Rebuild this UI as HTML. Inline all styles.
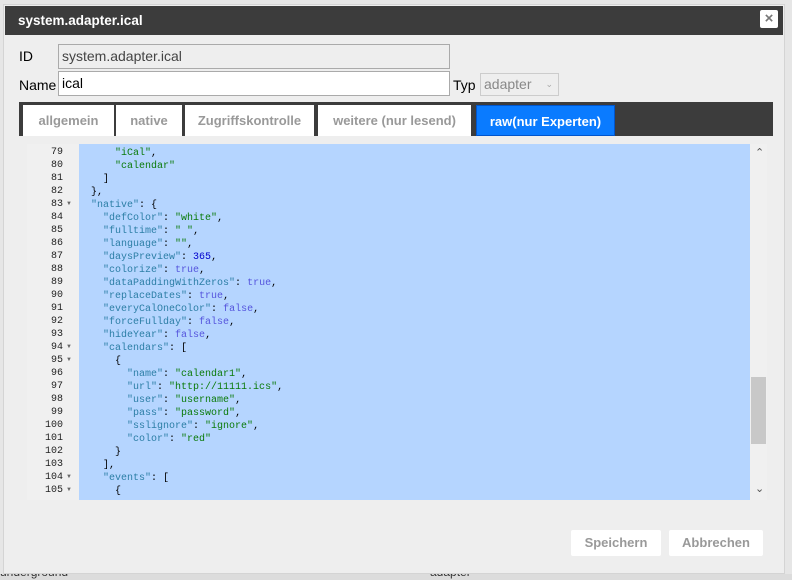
<!DOCTYPE html>
<html><head><style>
body{margin:0;width:792px;height:580px;background:#e6e6e6;position:relative;overflow:hidden;font-family:"Liberation Sans",sans-serif;}
.dlg{position:absolute;left:3px;top:4px;width:782px;height:570px;background:#eeeeee;border:1px solid #d4d4d4;box-sizing:border-box}
.title{position:absolute;left:1px;top:1px;right:1px;height:29px;background:#3c3c3c;color:#fff;font-weight:bold;font-size:13.5px;line-height:29px;padding-left:13px}
.x{position:absolute;left:756px;top:5px;width:18px;height:18px;background:#fff;border-radius:2px;color:#777;font-size:15px;line-height:18px;text-align:center;font-weight:bold}
.lbl{position:absolute;font-size:14px;color:#000}
.inp{position:absolute;border:1px solid #aaa;font-size:14px;line-height:22px;padding-left:3px;box-sizing:border-box;color:#000}
.tabs{position:absolute;left:19px;top:102px;width:754px;height:34px;background:#3c3c3c}
.tab{position:absolute;top:3px;height:31px;background:#fff;color:#999;font-weight:bold;font-size:13px;line-height:31px;text-align:center}
.ed{position:absolute;left:27px;top:144px;width:740px;height:356px;background:#f0f0f0;overflow:hidden}
.gut{position:absolute;left:0;top:0;width:50px;height:356px;background:#f0f0f0}
.code{position:absolute;left:52px;top:0;width:671px;height:356px;background:#b5d5ff}
.ln{position:absolute;left:0;width:36px;text-align:right;font-family:"Liberation Mono",monospace;font-size:10px;color:#222}
.ar{position:absolute;left:39px;font-size:6px;color:#666}
pre{margin:0;position:absolute;left:0;top:3px;font-family:"Liberation Mono",monospace;font-size:10px;line-height:13px;color:#000}
.k{color:#2c7ea6}.s{color:#0a7a0a}.n{color:#0000cd}.b{color:#5555dd}
.sb{position:absolute;left:724px;top:0;width:16px;height:356px;background:#f0f0f0}
.btn{position:absolute;top:526px;height:26px;background:#fff;border-radius:2px;color:#999;font-weight:bold;font-size:13px;line-height:26px;text-align:center}
</style></head><body>
<div class="dlg">
<div class="title">system.adapter.ical</div>
<div class="x">×</div>
<div class="lbl" style="left:15px;top:43px">ID</div>
<div class="inp" style="left:54px;top:39px;width:392px;height:25px;background:#eee;color:#444">system.adapter.ical</div>
<div class="lbl" style="left:15px;top:72px">Name</div>
<div class="inp" style="left:54px;top:66px;width:392px;height:25px;background:#fff">ical</div>
<div class="lbl" style="left:449px;top:72px">Typ</div>
<div class="inp" style="left:476px;top:68px;width:79px;height:23px;background:#eee;color:#888;border-color:#ccc;line-height:21px">adapter <span style="position:absolute;right:5px;font-size:9px;color:#aaa">&#8964;</span></div>
</div>
<div class="tabs">
<div class="tab" style="left:4px;width:91px">allgemein</div>
<div class="tab" style="left:97px;width:66px">native</div>
<div class="tab" style="left:166px;width:129px">Zugriffskontrolle</div>
<div class="tab" style="left:299px;width:153px">weitere (nur lesend)</div>
<div class="tab" style="left:457px;width:139px;background:#0a7bff;color:#fff;border:1px solid #0055cc;box-sizing:border-box;top:3px">raw(nur Experten)</div>
</div>
<div class="ed">
<div class="gut">
<div style="position:absolute;top:3px;left:0">
<div class="ln" style="top:0">79</div><div class="ln" style="top:13px">80</div><div class="ln" style="top:26px">81</div><div class="ln" style="top:39px">82</div><div class="ln" style="top:52px">83</div><div class="ar" style="top:54px">▼</div><div class="ln" style="top:65px">84</div><div class="ln" style="top:78px">85</div><div class="ln" style="top:91px">86</div><div class="ln" style="top:104px">87</div><div class="ln" style="top:117px">88</div><div class="ln" style="top:130px">89</div><div class="ln" style="top:143px">90</div><div class="ln" style="top:156px">91</div><div class="ln" style="top:169px">92</div><div class="ln" style="top:182px">93</div><div class="ln" style="top:195px">94</div><div class="ar" style="top:197px">▼</div><div class="ln" style="top:208px">95</div><div class="ar" style="top:210px">▼</div><div class="ln" style="top:221px">96</div><div class="ln" style="top:234px">97</div><div class="ln" style="top:247px">98</div><div class="ln" style="top:260px">99</div><div class="ln" style="top:273px">100</div><div class="ln" style="top:286px">101</div><div class="ln" style="top:299px">102</div><div class="ln" style="top:312px">103</div><div class="ln" style="top:325px">104</div><div class="ar" style="top:327px">▼</div><div class="ln" style="top:338px">105</div><div class="ar" style="top:340px">▼</div>
</div></div>
<div class="code"><pre>      <span class="s">"iCal"</span>,
      <span class="s">"calendar"</span>
    ]
  },
  <span class="k">"native"</span>: {
    <span class="k">"defColor"</span>: <span class="s">"white"</span>,
    <span class="k">"fulltime"</span>: <span class="s">" "</span>,
    <span class="k">"language"</span>: <span class="s">""</span>,
    <span class="k">"daysPreview"</span>: <span class="n">365</span>,
    <span class="k">"colorize"</span>: <span class="b">true</span>,
    <span class="k">"dataPaddingWithZeros"</span>: <span class="b">true</span>,
    <span class="k">"replaceDates"</span>: <span class="b">true</span>,
    <span class="k">"everyCalOneColor"</span>: <span class="b">false</span>,
    <span class="k">"forceFullday"</span>: <span class="b">false</span>,
    <span class="k">"hideYear"</span>: <span class="b">false</span>,
    <span class="k">"calendars"</span>: [
      {
        <span class="k">"name"</span>: <span class="s">"calendar1"</span>,
        <span class="k">"url"</span>: <span class="s">"http://11111.ics"</span>,
        <span class="k">"user"</span>: <span class="s">"username"</span>,
        <span class="k">"pass"</span>: <span class="s">"password"</span>,
        <span class="k">"sslignore"</span>: <span class="s">"ignore"</span>,
        <span class="k">"color"</span>: <span class="s">"red"</span>
      }
    ],
    <span class="k">"events"</span>: [
      {</pre></div>
<div class="sb"><div style="position:absolute;left:4px;top:2px;font-size:11px;color:#555">&#8963;</div><div style="position:absolute;left:0;top:233px;width:15px;height:67px;background:#c8c8c8"></div><div style="position:absolute;left:4px;top:338px;font-size:11px;color:#555">&#8964;</div></div>
</div>
<div class="btn" style="left:571px;top:530px;width:90px">Speichern</div>
<div class="btn" style="left:669px;top:530px;width:94px">Abbrechen</div>
<div style="position:absolute;left:0;top:574px;width:792px;height:6px;background:#dcdcdc;overflow:hidden"><span style="position:absolute;left:0;top:-9px;font-size:12px;color:#333">underground</span><span style="position:absolute;left:430px;top:-9px;font-size:12px;color:#333">adapter</span></div>
</body></html>
